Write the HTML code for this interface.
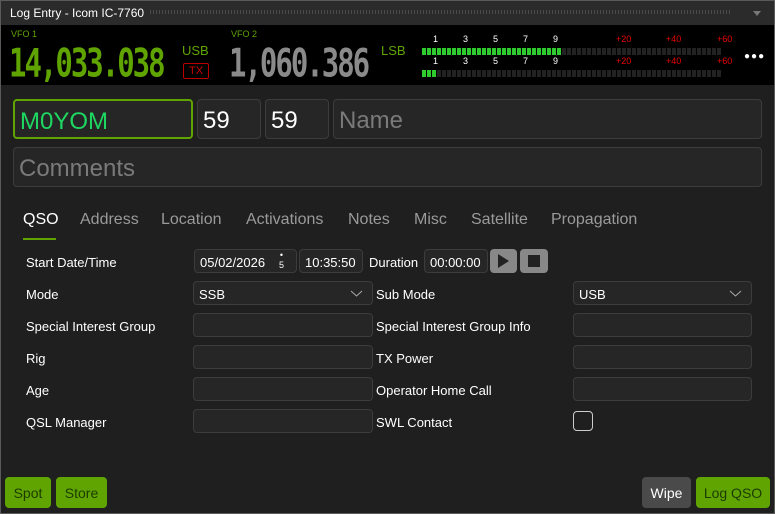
<!DOCTYPE html>
<html><head><style>
*{box-sizing:border-box;margin:0;padding:0}
body{width:775px;height:514px;background:#1f1f1f;font-family:"Liberation Sans",sans-serif;position:relative;overflow:hidden;color:#fff}
.a{position:absolute}
.win{left:0;top:0;width:775px;height:514px;border:1px solid #5a5a5a}
.title{left:1px;top:1px;width:773px;height:24px;background:#2b2b2b;font-size:12px;color:#fff;padding:5px 9px}
.vfo{left:1px;top:25px;width:773px;height:60px;background:#000}
.seg{font-family:"DejaVu Sans Mono","Liberation Mono",monospace;letter-spacing:-2px;transform:scaleY(1.35);transform-origin:top left}
.box{background:#262626;border:1px solid #3c3c3c;border-radius:4px}
.lbl{font-size:13px;color:#fff}
.inp{background:#262626;border:1px solid #3c3c3c;border-radius:4px;height:24px;font-size:13px;padding:5px 5px}
.tab{font-size:16px;color:#9a9a9a;top:211px}
.btn{background:#5fa400;border-radius:4px;font-size:14px;color:#1d3b00;text-align:center;line-height:32px;height:31px}
.ml span{position:absolute;font-size:9px}
</style></head><body>
<div class="a win"></div>
<div class="a title">Log Entry - Icom IC-7760</div>
<div class="a" style="left:150px;top:10px;width:580px;height:4px;background:repeating-linear-gradient(90deg,#4a4a4a 0 1px,transparent 1px 3px)"></div>
<div class="a" style="left:753px;top:11px;border:4px solid transparent;border-top:5px solid #777"></div>
<div class="a vfo"></div>
<div class="a" style="left:11px;top:29px;font-size:9px;color:#5fa400">VFO 1</div>
<div class="a seg" style="left:9px;top:40px;font-size:29px;color:#5fa400;font-weight:bold">14,033.038</div>
<div class="a" style="left:182px;top:43px;font-size:13px;color:#5fa400">USB</div>
<div class="a" style="left:183px;top:63px;width:26px;height:16px;border:1px solid #b00;border-radius:2px;color:#c00;font-size:11px;text-align:center;line-height:14px">TX</div>
<div class="a" style="left:231px;top:29px;font-size:9px;color:#5fa400">VFO 2</div>
<div class="a seg" style="left:229px;top:40px;font-size:29px;color:#8a8a8a;font-weight:bold">1,060.386</div>
<div class="a" style="left:381px;top:43px;font-size:13px;color:#5fa400">LSB</div>
<div class="a" style="left:422px;top:48px;width:300px;height:7px;background:repeating-linear-gradient(90deg,#2ecc2e 0 4px,transparent 4px 5px) 0 0/140px 7px no-repeat,repeating-linear-gradient(90deg,#222 0 4px,transparent 4px 5px)"></div>
<div class="a" style="left:422px;top:70px;width:300px;height:7px;background:repeating-linear-gradient(90deg,#2ecc2e 0 4px,transparent 4px 5px) 0 0/15px 7px no-repeat,repeating-linear-gradient(90deg,#222 0 4px,transparent 4px 5px)"></div>
<div class="a ml" style="left:433px;top:34px;color:#fff">
<span style="left:0">1</span><span style="left:30px">3</span><span style="left:60px">5</span><span style="left:90px">7</span><span style="left:120px">9</span>
<span style="left:183px;color:#e00">+20</span><span style="left:233px;color:#e00">+40</span><span style="left:284px;color:#e00">+60</span>
<span style="left:0;top:22px">1</span><span style="left:30px;top:22px">3</span><span style="left:60px;top:22px">5</span><span style="left:90px;top:22px">7</span><span style="left:120px;top:22px">9</span>
<span style="left:183px;top:22px;color:#e00">+20</span><span style="left:233px;top:22px;color:#e00">+40</span><span style="left:284px;top:22px;color:#e00">+60</span>
</div>
<div class="a" style="left:744px;top:51px;font-size:10px;letter-spacing:1px;color:#fff">●●●</div>

<div class="a" style="left:13px;top:99px;width:180px;height:40px;border:2px solid #5fa400;border-radius:4px;background:#262626;color:#1ed760;font-size:24px;padding:7px 5px 0">M0YOM</div>
<div class="a box" style="left:197px;top:99px;width:64px;height:40px;font-size:24px;padding:7px 5px 0">59</div>
<div class="a box" style="left:265px;top:99px;width:64px;height:40px;font-size:24px;padding:7px 5px 0">59</div>
<div class="a box" style="left:333px;top:99px;width:429px;height:40px;font-size:24px;padding:7px 5px 0;color:#7a7a7a">Name</div>
<div class="a box" style="left:13px;top:147px;width:749px;height:40px;font-size:24px;padding:7px 5px 0;color:#7a7a7a">Comments</div>

<div class="a tab" style="left:23px;color:#fff">QSO</div>
<div class="a" style="left:23px;top:238px;width:33px;height:2px;background:#5fa400"></div>
<div class="a tab" style="left:80px">Address</div>
<div class="a tab" style="left:161px">Location</div>
<div class="a tab" style="left:246px">Activations</div>
<div class="a tab" style="left:348px">Notes</div>
<div class="a tab" style="left:414px">Misc</div>
<div class="a tab" style="left:471px">Satellite</div>
<div class="a tab" style="left:551px">Propagation</div>

<div class="a lbl" style="left:26px;top:255px">Start Date/Time</div>
<div class="a inp" style="left:194px;top:249px;width:103px">05/02/2026</div>
<div class="a" style="left:279px;top:250px;font-size:9px;line-height:10px;text-align:center;color:#fff">•<br>5</div>
<div class="a inp" style="left:299px;top:249px;width:64px">10:35:50</div>
<div class="a lbl" style="left:369px;top:255px">Duration</div>
<div class="a inp" style="left:424px;top:249px;width:64px">00:00:00</div>
<div class="a" style="left:490px;top:249px;width:27px;height:24px;background:#888;border-radius:4px"><div class="a" style="left:8px;top:5px;border-left:11px solid #222;border-top:7px solid transparent;border-bottom:7px solid transparent"></div></div>
<div class="a" style="left:520px;top:249px;width:28px;height:24px;background:#888;border-radius:4px"><div class="a" style="left:8px;top:6px;width:12px;height:12px;background:#222"></div></div>

<div class="a lbl" style="left:26px;top:287px">Mode</div>
<div class="a inp" style="left:193px;top:281px;width:180px">SSB<svg class="a" style="right:9px;top:8px" width="13" height="7"><path d="M1 1 L6.5 6 L12 1" stroke="#aaa" fill="none"/></svg></div>
<div class="a lbl" style="left:376px;top:287px">Sub Mode</div>
<div class="a inp" style="left:573px;top:281px;width:179px">USB<svg class="a" style="right:9px;top:8px" width="13" height="7"><path d="M1 1 L6.5 6 L12 1" stroke="#aaa" fill="none"/></svg></div>

<div class="a lbl" style="left:26px;top:319px">Special Interest Group</div>
<div class="a inp" style="left:193px;top:313px;width:180px"></div>
<div class="a lbl" style="left:376px;top:319px">Special Interest Group Info</div>
<div class="a inp" style="left:573px;top:313px;width:179px"></div>
<div class="a lbl" style="left:26px;top:351px">Rig</div>
<div class="a inp" style="left:193px;top:345px;width:180px"></div>
<div class="a lbl" style="left:376px;top:351px">TX Power</div>
<div class="a inp" style="left:573px;top:345px;width:179px"></div>
<div class="a lbl" style="left:26px;top:383px">Age</div>
<div class="a inp" style="left:193px;top:377px;width:180px"></div>
<div class="a lbl" style="left:376px;top:383px">Operator Home Call</div>
<div class="a inp" style="left:573px;top:377px;width:179px"></div>
<div class="a lbl" style="left:26px;top:415px">QSL Manager</div>
<div class="a inp" style="left:193px;top:409px;width:180px"></div>
<div class="a lbl" style="left:376px;top:415px">SWL Contact</div>
<div class="a" style="left:573px;top:411px;width:20px;height:20px;border:1px solid #ccc;border-radius:4px"></div>

<div class="a btn" style="left:5px;top:477px;width:46px">Spot</div>
<div class="a btn" style="left:56px;top:477px;width:51px">Store</div>
<div class="a btn" style="left:642px;top:477px;width:49px;background:#4a4a4a;color:#fff">Wipe</div>
<div class="a btn" style="left:696px;top:477px;width:74px">Log QSO</div>
</body></html>
